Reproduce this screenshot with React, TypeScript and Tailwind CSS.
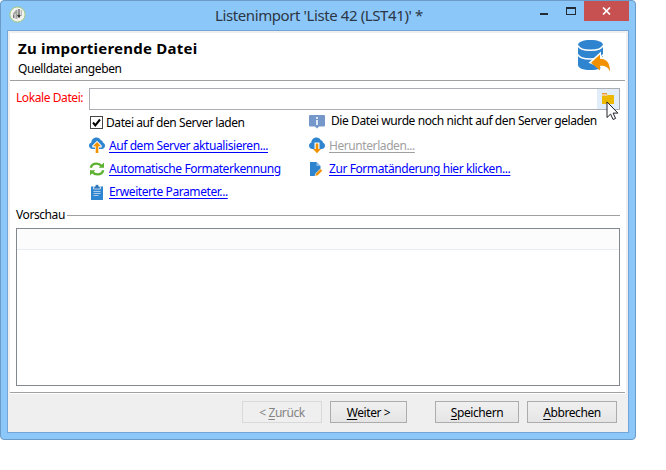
import type { ReactNode } from "react";

function AppIcon() {
  return (
    <svg width="17" height="17" viewBox="0 0 17 17">
      <circle cx="8.500" cy="8.500" r="7.600" fill="#f1f3ee" stroke="#a5c878" strokeWidth="1" />
      <path d="M4 7.500l3-3.500 1.500-.5v9L6.500 13V7.500L4 9z" fill="#a2a2a0" />
      <path d="M4 9l1.500-.8v4L4 12z" fill="#777" />
      <path d="M10 3v6M8.700 9.300l1.300 2.200 1.300-2.200z" fill="#333" stroke="#333" strokeWidth="1" />
      <path d="M12.300 4v6" stroke="#b5b5b5" strokeWidth="1.200" />
    </svg>
  );
}

function DatabaseIcon() {
  return (
    <svg width="34" height="34" viewBox="0 0 34 34">
      <path d="M1 5C1 2 6 0 13.500 0S26 2 26 5v20c0 3-5 5-12.500 5S1 28 1 25z" fill="#2f84d0" />
      <path d="M1 5.500c1 3 6 4.700 12.500 4.700S25 8.500 26 5.500M1 14.500c1 3 6 4.500 12.500 4.500S25 17 26 14.500" fill="none" stroke="#fff" strokeWidth="1.500" />
      <path d="M11.500 22.700L24 11.500v5.500h10v15z" fill="#fff" />
      <path d="M14 22.700L23 14.500v4.300c6.500 0 10 3.700 10 12.700-2-4.500-5-6-10-5.800v4.800z" fill="#f29100" />
    </svg>
  );
}

function CloudIcon({ up }: { up: boolean }) {
  return (
    <svg width="16" height="17" viewBox="0 0 16 17">
      <path d="M3.500 12C1.500 12 0 10.500 0 8.700 0 7 .9 5.800 2.400 5.400 2.300 2.700 4.700.5 7.400.5c2 0 3.700 1 4.400 2.700 1.300.1 2 1 2 2.200 1.300.4 2.200 1.600 2.200 3.100 0 2-1.400 3.500-3.300 3.500z" fill="#2f84d0" />
      {up ? (
        <>
          <path d="M8 3.800L3.300 8.500v2H6v2h4v-2h2.700v-2z" fill="#fff" />
          <path d="M8 5l4 4.300H9.300V16H6.700V9.300H4z" fill="#f29100" />
        </>
      ) : (
        <>
          <path d="M5.500 5.500h5V12h-5z" fill="#fff" />
          <path d="M6.700 6.500h2.600V12H12L8 16.300 4 12h2.700z" fill="#f29100" />
        </>
      )}
    </svg>
  );
}

function RefreshIcon() {
  return (
    <svg width="16" height="16" viewBox="0 0 16 16">
      <path d="M1.800 6.800C2.500 4 4.800 2.600 7.500 2.600c2 0 3.700.7 4.900 2.200M14.200 9.200c-.7 2.800-3 4.200-5.700 4.200-2 0-3.700-.7-4.900-2.200" fill="none" stroke="#5cb130" strokeWidth="2.400" />
      <path d="M15 1.500v5.300H9.700zM1 14.500V9.200h5.300z" fill="#5cb130" />
    </svg>
  );
}

function ClipboardIcon() {
  return (
    <svg width="16" height="16" viewBox="0 0 16 16">
      <path d="M2 2.500h12V16H2z" fill="#2f84d0" />
      <path d="M4.500 5V2.800H6C6 1.300 6.700.5 8 .5s2 .8 2 2.300h1.500V5z" fill="#2f74b8" stroke="#fff" strokeWidth=".7" />
      <path d="M4.500 7.500h7M4.500 9.500h7M4.500 11.500h5" stroke="#a8cdec" strokeWidth="1" />
    </svg>
  );
}

function InfoIcon() {
  return (
    <svg width="16" height="15" viewBox="0 0 16 15">
      <path d="M1 1h14q1 0 1 1v9.500q0 1-1 1h-5L8 14.500 6 12.500H1q-1 0-1-1V2q0-1 1-1z" fill="#7597c9" />
      <path d="M7 3h2v2H7zM7 6h2v5H7z" fill="#dfe8f5" />
    </svg>
  );
}

function EditIcon() {
  return (
    <svg width="16" height="16" viewBox="0 0 16 16">
      <path d="M1 1h6.500l4 4v4L6 15H1z" fill="#2f84d0" />
      <path d="M7.500 1l4 4h-4z" fill="#8dbce6" />
      <path d="M6 15.300l.8-2.800L11.500 7.800l2 2-4.700 4.700z" fill="#f29100" stroke="#fff" strokeWidth=".6" />
    </svg>
  );
}

function FolderIcon() {
  return (
    <svg width="12" height="12" viewBox="0 0 12 12">
      <path d="M0 1h5l1 1h6v3H0z" fill="#f3c98c" />
      <path d="M0 0h5v1H0z" fill="#e99a2e" />
      <path d="M0 3h5l1-1h6v9H0z" fill="#ecb800" />
    </svg>
  );
}

function Cursor() {
  return (
    <svg className="absolute top-[12px] left-[9px] z-10" width="13" height="20" viewBox="0 0 13 20">
      <path d="M1 .9v15.600l3.600-3.400 2.500 5.400 2.500-1.100-2.500-5.300h4.800z" fill="#fff" stroke="#20202a" strokeWidth="1" />
    </svg>
  );
}

function Option({ icon, children, disabled = false }: { icon: ReactNode; children: ReactNode; disabled?: boolean }) {
  return (
    <div className="flex h-[23px] items-center">
      <span className="flex w-5 shrink-0">{icon}</span>
      <a className={`underline underline-offset-2 ${disabled ? "text-[#a0a0a0]" : "text-[#0000ff]"}`}>{children}</a>
    </div>
  );
}

function Button({ className, letter, rest, before = "", disabled = false }: { className: string; letter: string; rest: string; before?: string; disabled?: boolean }) {
  return (
    <button
      className={`h-[22px] border leading-[19px] ${className} ${
        disabled ? "border-[#d9d9d9] bg-[#efefef] text-[#838383]" : "border-[#acacac] bg-linear-to-b from-[#f0f0f0] to-[#e5e5e5] text-black"
      }`}
    >
      {before}
      <span className="underline underline-offset-2">{letter}</span>
      {rest}
    </button>
  );
}

export default function App() {
  return (
    <div className="h-[470px] w-[666px] overflow-hidden bg-white font-['Noto_Sans','Open_Sans',sans-serif] text-[12px] leading-4 tracking-[-0.42px] whitespace-nowrap text-black">
      <div className="flex h-[440px] w-[636px] flex-col rounded-[4px] border border-[#6a9bc9] bg-[#8cc7fa] px-[6px] pb-[6px]">
        <header className="flex h-[29px] shrink-0">
          <div className="w-[208px] pt-[5px] pl-[2px]"><AppIcon /></div>
          <h1 className="flex-1 pt-[4px] text-[15px] leading-[21px] tracking-[-0.4px] text-[#2b3644]">
            Listenimport 'Liste 42 (LST41)' *
          </h1>
          <div className="flex w-[89px] shrink-0">
            <span className="mt-[12px] h-[2px] w-[8px] bg-[#222b33]" />
            <span className="mt-[6px] ml-[18px] h-[8px] w-[10px] border border-t-2 border-[#222b33]" />
            <span className="ml-[8px] flex h-[20px] w-[45px] items-center justify-center bg-[#c75050]">
              <svg width="9" height="8" viewBox="0 0 9 8"><path d="M1 .5l7 7M8 .5l-7 7" stroke="#fff" strokeWidth="1.700" /></svg>
            </span>
          </div>
        </header>

        <main className="flex flex-1 flex-col border border-[#73a6d6] bg-[#efefef] px-[2px] pt-[2px]">
          <div className="flex h-[361px] w-[616px] shrink-0 flex-col border-b border-white bg-white">
            <section className="flex h-[48px] w-[615px] shrink-0 justify-between border-b border-[#a0a0a0] pr-[14px] pl-2">
              <div>
                <h2 className="pt-[5px] text-[15px] leading-5 font-bold tracking-[0.23px]">Zu importierende Datei</h2>
                <p className="pt-[3px]">Quelldatei angeben</p>
              </div>
              <div className="pt-[7px]"><DatabaseIcon /></div>
            </section>

            <section className="h-[126px] shrink-0 pt-[7px] pr-[6px] pl-[6px]">
              <div className="flex h-[22px]">
                <label className="w-[73px] shrink-0 pt-[2px] text-[#ff0000]">Lokale Datei:</label>
                <div className="flex flex-1 justify-end border border-[#abadb3]">
                  <span className="relative flex w-[22px] justify-center bg-[#e1eefa] pt-[4px]">
                    <FolderIcon />
                    <Cursor />
                  </span>
                </div>
              </div>
              <div className="flex pl-[73px]">
                <div className="w-[220px] pt-px">
                  <div className="flex h-[23px] items-center gap-[3px] pl-px">
                    <span className="flex size-[13px] items-center justify-center border border-[#444] bg-white">
                      <svg width="9" height="9" viewBox="0 0 9 9"><path d="M1 4.500l2.300 2.800L8 1.500" fill="none" stroke="#000" strokeWidth="2" /></svg>
                    </span>
                    <span>Datei auf den Server laden</span>
                  </div>
                  <Option icon={<CloudIcon up />}>Auf dem Server aktualisieren...</Option>
                  <Option icon={<RefreshIcon />}>Automatische Formaterkennung</Option>
                  <Option icon={<ClipboardIcon />}>Erweiterte Parameter...</Option>
                </div>
                <div>
                  <div className="flex h-[24px] items-center gap-[6px] pb-[2px]">
                    <InfoIcon />
                    <span>Die Datei wurde noch nicht auf den Server geladen</span>
                  </div>
                  <Option disabled icon={<CloudIcon up={false} />}>Herunterladen...</Option>
                  <Option icon={<EditIcon />}>Zur Formatänderung hier klicken...</Option>
                </div>
              </div>
            </section>

            <section className="flex flex-1 flex-col px-[6px]">
              <div className="flex h-[16px] items-center gap-[2px]">
                <h3>Vorschau</h3>
                <span className="h-px flex-1 bg-[#a0a0a0]" />
              </div>
              <div className="mt-[5px] h-[158px] border border-[#828790]">
                <div className="h-[21px] border-b border-[#e5edf5] bg-[#fcfcfc]" />
              </div>
            </section>
            <div className="h-px w-[615px] shrink-0 bg-[#a0a0a0]" />
          </div>
          <footer className="flex pt-[7px] pl-[232px]">
            <Button className="w-[80px]" disabled before="< " letter="Z" rest="urück" />
            <Button className="ml-[8px] w-[77px]" letter="W" rest="eiter >" />
            <Button className="ml-[28px] w-[84px]" letter="S" rest="peichern" />
            <Button className="ml-[8px] w-[90px]" letter="A" rest="bbrechen" />
          </footer>
        </main>
      </div>
    </div>
  );
}
